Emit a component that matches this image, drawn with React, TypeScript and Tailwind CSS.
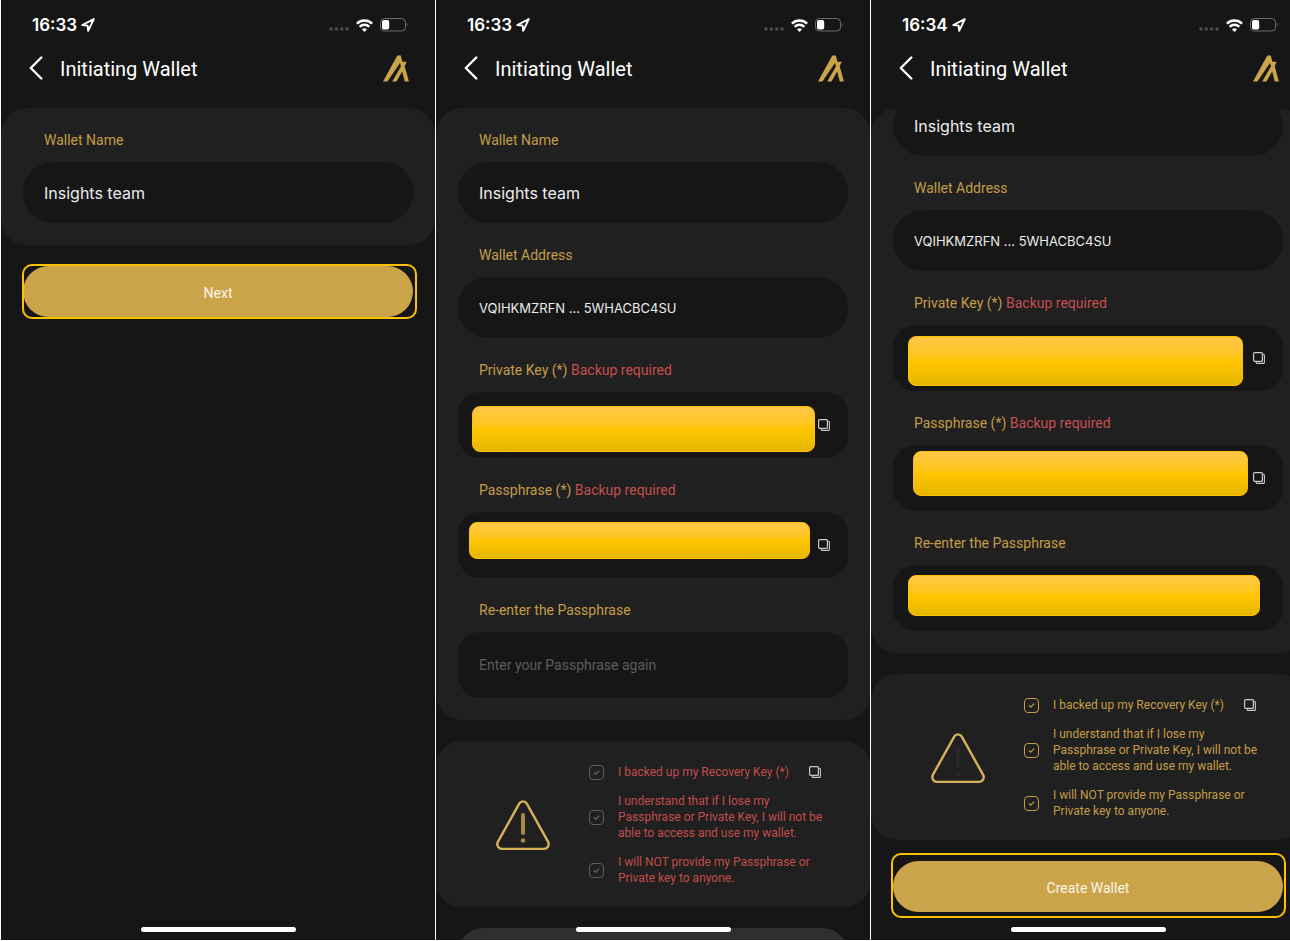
import React, {useState} from 'react'

type FieldProps = {
  id: string
  label: string
  value?: string
  placeholder?: string
  note?: string
  mask?: string
  tall?: boolean
  small?: boolean
  copy?: boolean
  hideLabel?: boolean
}

const LocationIcon = () => (
  <svg width="14" height="14" viewBox="0 0 14 14" fill="none" stroke="#fff" strokeWidth="1.9" strokeLinejoin="round">
    <path d="M12.8 1.2 1.3 7l5.300.600.600 5.300z" />
  </svg>
)

const SignalIcon = () => (
  <svg width="20" height="16" viewBox="0 0 20 16" fill="#4d4d4d">
    <circle cx="2" cy="12" r="1.8" />
    <circle cx="7.3" cy="12" r="1.8" />
    <circle cx="12.7" cy="12" r="1.8" />
    <circle cx="18" cy="12" r="1.8" />
  </svg>
)

const WifiIcon = () => (
  <svg width="17" height="13" viewBox="0 0 17 13" fill="none" stroke="#fff" strokeWidth="2.5">
    <path d="M.9 4.7a10.8 10.8 0 0 1 15.2 0" />
    <path d="M3.7 7.8a6.8 6.8 0 0 1 9.6 0" />
    <path d="M8.5 13 6 10.4a3.6 3.6 0 0 1 5 0z" fill="#fff" stroke="none" />
  </svg>
)

const BatteryIcon = () => (
  <svg width="28" height="14" viewBox="0 0 28 14" fill="none">
    <rect x=".5" y=".5" width="25" height="12.5" rx="3.8" stroke="#6b6b6b" />
    <rect x="2" y="2" width="7.2" height="9.5" rx="2" fill="#fff" />
    <path d="M26.8 4.8c1.1.6 1.1 3.3 0 3.9z" fill="#6b6b6b" />
  </svg>
)

const BackIcon = () => (
  <svg width="14" height="24" viewBox="0 0 14 24" fill="none" stroke="#fff" strokeWidth="2.4" strokeLinecap="round" strokeLinejoin="round">
    <path d="M12.3 1.5 1.8 12l10.5 10.5" />
  </svg>
)

const Logo = () => (
  <svg width="26" height="27" viewBox="0 0 26 27" fill="#cba349">
    <path d="M0 26.5 14.3.5h3.500l1.600 6.200h4.300l-2 4.600L25.900 26.500h-4.200L19.200 16.500l-5.700 10H9.200l8.700-15-.9-3.500L4.400 26.500z" />
  </svg>
)

const CopyIcon = () => (
  <svg width="12" height="12" viewBox="0 0 12 12" fill="none" stroke="#c9c9c9">
    <rect x=".6" y=".6" width="8.8" height="8.8" rx="1" strokeWidth="1.2" />
    <path d="M9.8 2.2h.6a1 1 0 0 1 1 1v7.2a1 1 0 0 1-1 1H4.2a1 1 0 0 1-1-1v-.6" strokeWidth="1.1" />
  </svg>
)

const WarningIcon = ({faded}: {faded?: boolean}) => (
  <svg width="54" height="51" viewBox="0 0 54 51" fill="none" className="shrink-0">
    <path
      d="M23.2 3.6 2 41.6c-1.8 3.3.3 7.3 4 7.3h42c3.7 0 5.8-4 4-7.3L30.8 3.6c-1.7-3-5.9-3-7.6 0z"
      stroke="#d5b15a"
      strokeWidth="2.4"
    />
    <path d="M27 15v18" stroke={faded ? '#292826' : '#a88a47'} strokeWidth="4" strokeLinecap="round" />
    <circle cx="27" cy="40.5" r="2.3" fill={faded ? '#292826' : '#a88a47'} />
  </svg>
)

const StatusBar = ({time}: {time: string}) => (
  <div className="flex h-12 items-center justify-between pl-[31px] pr-[27px] pt-0.5">
    <div className="flex items-center gap-1">
      <span className="text-[17px] font-semibold leading-5">{time}</span>
      <LocationIcon />
    </div>
    <div className="flex items-center gap-[7px]">
      <SignalIcon />
      <WifiIcon />
      <BatteryIcon />
    </div>
  </div>
)

const Header = () => (
  <header className="mb-5 flex h-10 items-center pl-7 pr-[26px]">
    <button type="button" aria-label="Back">
      <BackIcon />
    </button>
    <h1 className="ml-[17px] flex-1 pt-0.5 font-['Roboto',sans-serif] text-xl font-normal">Initiating Wallet</h1>
    <Logo />
  </header>
)

const Field = ({id, label, value = '', placeholder, note, mask, tall, small, copy, hideLabel}: FieldProps) => {
  const [text, setText] = useState(value)

  return (
    <div>
      {!hideLabel && (
        <label
          htmlFor={id}
          className="block px-[21px] pb-3 pt-[22px] font-['Roboto',sans-serif] text-sm leading-5 text-[#c49d46]"
        >
          {label}
          {note && <span className="text-[#c44f50]"> {note}</span>}
        </label>
      )}
      <div className="relative">
        <input
          id={id}
          value={text}
          aria-label={hideLabel ? label : undefined}
          placeholder={placeholder}
          onChange={(e) => setText(e.target.value)}
          className={`block w-full bg-[#161616] px-[21px] text-[#ececec] outline-none placeholder:text-[#5c5c5c] ${
            tall ? "h-[66px] rounded-[22px] font-['Roboto',sans-serif] text-sm" : 'h-[61px] rounded-[30px]'
          } ${small ? 'text-[13px]' : ''} ${!tall && !small ? 'text-base' : ''}`}
        />
        {mask && (
          <div
            className={`absolute rounded-lg border border-[#ffc000] bg-linear-to-b from-[#ffc746] via-[#ffc600] to-[#e5b600] ${mask}`}
          />
        )}
        {copy && (
          <button type="button" aria-label={`Copy ${label}`} className="absolute inset-y-0 right-[18px]">
            <CopyIcon />
          </button>
        )}
      </div>
    </div>
  )
}

const Check = ({id, text, checked, copy}: {id: string; text: string; checked: boolean; copy?: boolean}) => {
  const [on, setOn] = useState(checked)

  return (
    <div className="flex items-center">
      <span className="relative mr-[14px] size-[15px] shrink-0">
        <input
          type="checkbox"
          id={id}
          checked={on}
          onChange={() => setOn(!on)}
          className="peer block size-full appearance-none rounded border border-[#5e5e5e] checked:border-[#c49d46]"
        />
        <svg
          viewBox="0 0 15 15"
          fill="none"
          strokeWidth="1.2"
          className="pointer-events-none absolute inset-0 stroke-[#6a6a6a] peer-checked:stroke-[#c49d46]"
        >
          <path d="m4.8 7.4 1.9 1.8 3.5-3.6" />
        </svg>
      </span>
      <label
        htmlFor={id}
        className={`font-['Roboto',sans-serif] text-xs leading-4 ${on ? 'text-[#c49d46]' : 'text-[#c14c4d]'}`}
      >
        {text}
      </label>
      {copy && (
        <button type="button" aria-label="Copy recovery key" className="ml-5">
          <CopyIcon />
        </button>
      )}
    </div>
  )
}

const Notice = ({prefix, checked}: {prefix: string; checked: boolean}) => (
  <section className="mt-[21px] flex items-center gap-[39px] rounded-[26px] bg-[#202020] pb-[21px] pl-[60px] pr-10 pt-[23px]">
    <WarningIcon faded={checked} />
    <div className="flex flex-1 flex-col gap-[13px]">
      <Check id={`${prefix}-backup`} text="I backed up my Recovery Key (*)" checked={checked} copy />
      <Check
        id={`${prefix}-lose`}
        text="I understand that if I lose my Passphrase or Private Key, I will not be able to access and use my wallet."
        checked={checked}
      />
      <Check
        id={`${prefix}-share`}
        text="I will NOT provide my Passphrase or Private key to anyone."
        checked={checked}
      />
    </div>
  </section>
)

const Action = ({text, disabled, frame}: {text?: string; disabled?: boolean; frame?: string}) => (
  <div className="relative mx-[22px] mt-[21px]">
    <button
      type="button"
      disabled={disabled}
      aria-label={text ? undefined : 'Create Wallet'}
      className="block h-[51px] w-full rounded-[26px] bg-[#cba349] pt-0.5 font-['Roboto',sans-serif] text-sm text-[#fbf6ea] disabled:bg-[#2f2f2f]"
    >
      {text}
    </button>
    {frame && <div className={`pointer-events-none absolute rounded-[10px] border-2 border-[#ffc000] ${frame}`} />}
  </div>
)

const Card = ({children}: {children: React.ReactNode}) => (
  <section className="rounded-[26px] bg-[#202020] px-[22px] pb-[22px]">{children}</section>
)

const Screen = ({time, scroll = '', children}: {time: string; scroll?: string; children: React.ReactNode}) => (
  <main className="relative flex h-screen flex-col overflow-hidden border-b border-l border-white bg-[#161616]">
    <StatusBar time={time} />
    <Header />
    <div className="min-h-0 flex-1 overflow-hidden rounded-t-[26px] bg-[#161616]">
      <div className={scroll}>{children}</div>
    </div>
    <div className="absolute inset-x-0 bottom-2 mx-auto h-[5px] w-[155px] rounded-full bg-white" />
  </main>
)

const App = () => (
  <div className="grid auto-cols-[minmax(435px,1fr)] grid-flow-col overflow-hidden bg-[#161616] font-['Inter',sans-serif] text-white">
    <Screen time="16:33">
      <Card>
        <Field id="a-name" label="Wallet Name" value="Insights team" />
      </Card>
      <Action text="Next" frame="-top-0.5 -bottom-0.5 -left-px -right-1" />
    </Screen>

    <Screen time="16:33">
      <Card>
        <Field id="b-name" label="Wallet Name" value="Insights team" />
        <Field id="b-address" label="Wallet Address" value="VQIHKMZRFN ... 5WHACBC4SU" small />
        <Field
          id="b-key"
          label="Private Key (*)"
          note="Backup required"
          mask="top-[14px] left-[14px] right-[33px] h-[46px]"
          tall
          copy
        />
        <Field
          id="b-pass"
          label="Passphrase (*)"
          note="Backup required"
          mask="top-[10px] left-[11px] right-[38px] h-[37px]"
          tall
          copy
        />
        <Field id="b-again" label="Re-enter the Passphrase" placeholder="Enter your Passphrase again" tall />
      </Card>
      <Notice prefix="b" checked={false} />
      <Action disabled />
    </Screen>

    <Screen time="16:34" scroll="-mt-[13px]">
      <Card>
        <Field id="c-name" label="Wallet Name" value="Insights team" hideLabel />
        <Field id="c-address" label="Wallet Address" value="VQIHKMZRFN ... 5WHACBC4SU" small />
        <Field
          id="c-key"
          label="Private Key (*)"
          note="Backup required"
          mask="top-[11px] left-[15px] right-10 h-[50px]"
          tall
          copy
        />
        <Field
          id="c-pass"
          label="Passphrase (*)"
          note="Backup required"
          mask="top-[6px] left-5 right-[35px] h-[45px]"
          tall
          copy
        />
        <Field
          id="c-again"
          label="Re-enter the Passphrase"
          mask="top-[10px] left-[15px] right-[23px] h-[41px]"
          tall
        />
      </Card>
      <Notice prefix="c" checked />
      <Action text="Create Wallet" frame="-top-2 -bottom-[6px] -left-[2px] -right-[3px]" />
    </Screen>
  </div>
)

export default App
